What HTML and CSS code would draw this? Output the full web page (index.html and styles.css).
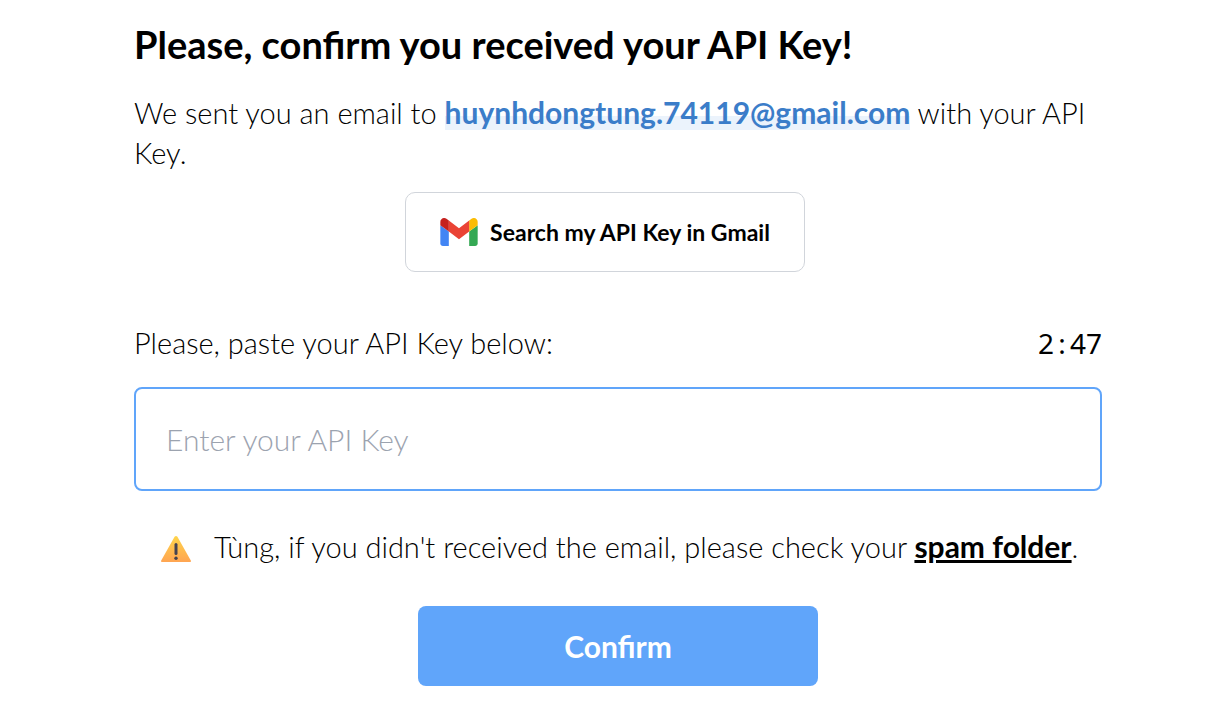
FILE: index.html
```html
<!DOCTYPE html>
<html lang="en">
<head>
<meta charset="utf-8">
<meta name="viewport" content="width=device-width, initial-scale=1">
<title>Confirm your API Key</title>
<link rel="stylesheet" href="styles.css">
</head>
<body>
<main class="page">
  <h1 class="title">Please, confirm you received your API Key!</h1>
  <p class="intro">We sent you an email to <strong class="email">huynhdongtung.74119@gmail.com</strong> with your API Key.</p>
  <div class="gmail-row">
    <button type="button" class="gmail-button">
      <svg class="gmail-icon" viewBox="52 42 88 66" aria-hidden="true">
        <path fill="#4285f4" d="M58 108h14V74L52 59v43c0 3.320 2.690 6 6 6"/>
        <path fill="#34a853" d="M120 108h14c3.320 0 6-2.690 6-6V59l-20 15"/>
        <path fill="#fbbc04" d="M120 48v26l20-15v-8c0-7.420-8.470-11.650-14.400-7.200"/>
        <path fill="#ea4335" d="M72 74V48l24 18 24-18v26L96 92"/>
        <path fill="#c5221f" d="M52 51v8l20 15V48l-5.600-4.200c-5.940-4.450-14.400-.220-14.400 7.200"/>
      </svg>
      Search my API Key in Gmail
    </button>
  </div>
  <form class="form">
    <div class="label-row">
      <label for="api-key">Please, paste your API Key below:</label>
      <time class="timer"><span>2</span><span>:</span><span>4</span><span>7</span></time>
    </div>
    <input class="key-input" id="api-key" type="text" placeholder="Enter your API Key">
    <p class="notice">
      <svg class="warning-icon" viewBox="0 0 32 28" aria-hidden="true">
        <defs><linearGradient id="amber" x1="0" y1="0" x2="0" y2="1"><stop offset="0" stop-color="#ffd54a"/><stop offset="1" stop-color="#ffa552"/></linearGradient></defs>
        <path fill="url(#amber)" d="M14.600 1.800Q16 0 17.400 1.800L30.800 25.500Q31.500 27 30 27H2Q.500 27 1.200 25.500Z"/>
        <rect x="14.500" y="8" width="3" height="12" rx="1.500" fill="#454250"/>
        <circle cx="16" cy="23.300" r="1.700" fill="#454250"/>
      </svg>
      <span>Tùng, if you didn't received the email, please check your <a class="spam-link" href="#">spam folder</a>.</span>
    </p>
    <button type="submit" class="confirm-button">Confirm</button>
  </form>
</main>
</body>
</html>
```
FILE: styles.css
```css
* { box-sizing: border-box; }

body {
  margin: 0;
  background: #fff;
  color: #000;
  font: 300 29px/40px Lato, "Open Sans", sans-serif;
}

h1, p { margin: 0; }

button, input { font: inherit; }

.page { padding: 19px 111px 40px 134px; }

.title {
  font-size: 38px;
  font-weight: 700;
  line-height: 50px;
}

.intro { margin-top: 23px; }

.email {
  font-size: 30px;
  font-weight: 700;
  color: #3b7dc9;
  background: linear-gradient(transparent 60%, #ebf3fc 60%);
}

.gmail-row {
  display: flex;
  justify-content: center;
  margin-top: 19px;
  padding-right: 26px;
}

.gmail-button {
  display: flex;
  align-items: center;
  justify-content: center;
  gap: 12px;
  width: 400px;
  height: 80px;
  border: 1px solid #d1d5db;
  border-radius: 10px;
  background: #fff;
  color: #000;
  font-size: 23px;
  font-weight: 700;
}

.gmail-icon { width: 38px; height: 28px; }

.form { margin-top: 51px; }

.label-row {
  display: flex;
  justify-content: space-between;
  align-items: center;
}

.timer {
  display: flex;
  font: 400 28px/38px "Noto Sans", sans-serif;
}

.timer span { width: 16px; text-align: center; }

.key-input {
  display: block;
  width: 100%;
  height: 104px;
  margin-top: 24px;
  padding: 0 30px;
  border: 2px solid #60a5fa;
  border-radius: 8px;
  outline: none;
  background: #fff;
  color: #000;
  font-size: 30px;
}

.key-input::placeholder { color: #9ca3af; opacity: 1; }

.notice {
  display: flex;
  align-items: center;
  gap: 22px;
  margin-top: 35px;
  padding-left: 26px;
}

.warning-icon { flex: none; width: 32px; height: 28px; margin-top: 4px; }

.spam-link {
  color: #000;
  font-size: 30px;
  font-weight: 700;
  text-decoration-thickness: 3px;
}

.confirm-button {
  display: block;
  width: 400px;
  height: 80px;
  margin: 39px auto 0;
  border: 0;
  border-radius: 8px;
  background: #60a5fa;
  color: #fff;
  font-size: 30px;
  font-weight: 700;
}
```
